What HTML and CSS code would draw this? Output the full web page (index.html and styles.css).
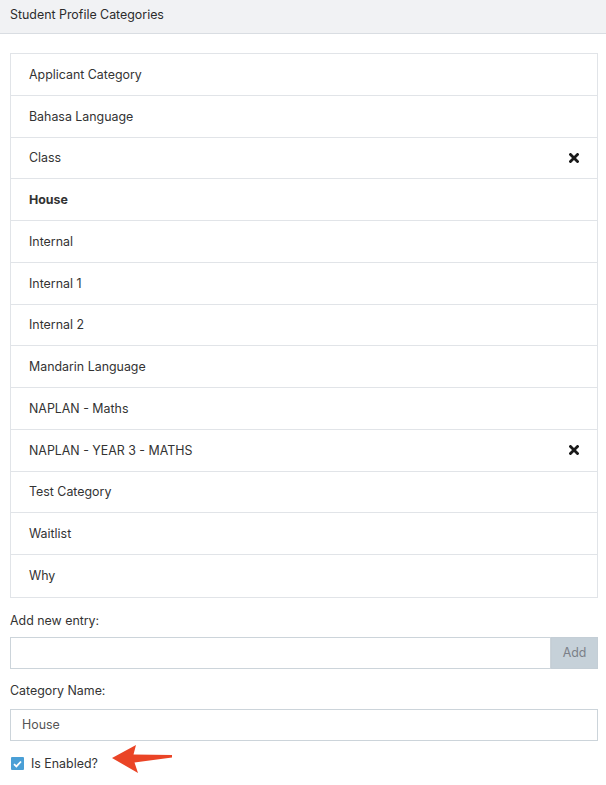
FILE: index.html
```html
<!DOCTYPE html>
<html lang="en">
<head>
    <meta charset="utf-8">
    <title>Student Profile Categories</title>
    <link rel="stylesheet" href="styles.css">
</head>
<body>
<div class="panel-head">Student Profile Categories</div>
<div class="panel-body">
    <ul class="cat-list">
        <li>Applicant Category</li>
        <li>Bahasa Language</li>
        <li>Class
            <span class="remove"><svg width="10" height="10" viewBox="0 0 10 10"><path d="M1.5 1.5L8.5 8.5M8.5 1.5L1.5 8.5" stroke="#1a1a1a" stroke-width="2.8" stroke-linecap="square"/></svg></span>
        </li>
        <li class="active">House</li>
        <li>Internal</li>
        <li>Internal 1</li>
        <li>Internal 2</li>
        <li>Mandarin Language</li>
        <li>NAPLAN - Maths</li>
        <li>NAPLAN - YEAR 3 - MATHS
            <span class="remove"><svg width="10" height="10" viewBox="0 0 10 10"><path d="M1.5 1.5L8.5 8.5M8.5 1.5L1.5 8.5" stroke="#1a1a1a" stroke-width="2.8" stroke-linecap="square"/></svg></span>
        </li>
        <li>Test Category</li>
        <li>Waitlist</li>
        <li>Why</li>
    </ul>

    <label class="field-label first">Add new entry:</label>
    <div class="input-group">
        <input type="text" class="text-input">
        <button class="btn-add">Add</button>
    </div>

    <label class="field-label second">Category Name:</label>
    <input type="text" class="text-input full" value="House">

    <div class="check-row">
        <span class="check-box"><svg width="9" height="8" viewBox="0 0 9 8"><path d="M1 4.2L3.4 6.4L8 1.5" stroke="#fff" stroke-width="1.8" fill="none"/></svg></span>
        <span class="check-label">Is Enabled?</span>
        <svg class="arrow" width="62" height="30" viewBox="0 0 62 30"><path d="M1 14L25 1L22.5 10.5L61 11L61 13.5L23.5 18.5L27 29Z" fill="#ea4426"/></svg>
    </div>
</div>
</body>
</html>
```
FILE: styles.css
```css
* {
    box-sizing: border-box;
}

body {
    margin: 0;
    font-family: Inter, "Liberation Sans", sans-serif;
    font-size: 12.4px;
    color: #333;
    background: #fff;
}

.panel-head {
    height: 34px;
    padding: 0 10px;
    line-height: 29px;
    background-color: #f1f2f4;
    border-bottom: 1px solid #d9dde2;
    color: #2b2b2b;
}

.panel-body {
    padding: 19px 8px 0 10px;
}

.cat-list {
    list-style: none;
    margin: 0;
    padding: 0;
    border: 1px solid #e1e4e8;
}

.cat-list li {
    display: flex;
    align-items: center;
    justify-content: space-between;
    height: 41.75px;
    padding: 0 18px 0 18px;
    border-bottom: 1px solid #e1e4e8;
}

.cat-list li:last-child {
    border-bottom: none;
}

.cat-list li.active {
    font-weight: bold;
}

.remove {
    display: flex;
}

.field-label {
    display: block;
    line-height: 16px;
}

.field-label.first {
    margin-top: 15px;
    margin-bottom: 8px;
}

.field-label.second {
    margin-top: 14px;
    margin-bottom: 10px;
}

.input-group {
    display: flex;
    height: 32px;
}

.text-input {
    height: 32px;
    flex: 1;
    border: 1px solid #ccd4da;
    padding: 0 11px;
    font-family: inherit;
    font-size: 12.4px;
    color: #555;
    outline: none;
}

.text-input.full {
    display: block;
    width: 100%;
}

.btn-add {
    width: 47px;
    border: 1px solid #c4ced6;
    background-color: #c6d1d9;
    color: #7b8088;
    font-family: inherit;
    font-size: 12.4px;
    padding: 0;
}

.check-row {
    display: flex;
    align-items: center;
    margin-top: 8px;
    padding-left: 1px;
}

.check-box {
    display: flex;
    align-items: center;
    justify-content: center;
    width: 13px;
    height: 13px;
    border-radius: 1px;
    background-color: #4a9fd6;
}

.check-label {
    margin-left: 7px;
}

.arrow {
    position: relative;
    top: -5px;
    margin-left: 13px;
}
```
